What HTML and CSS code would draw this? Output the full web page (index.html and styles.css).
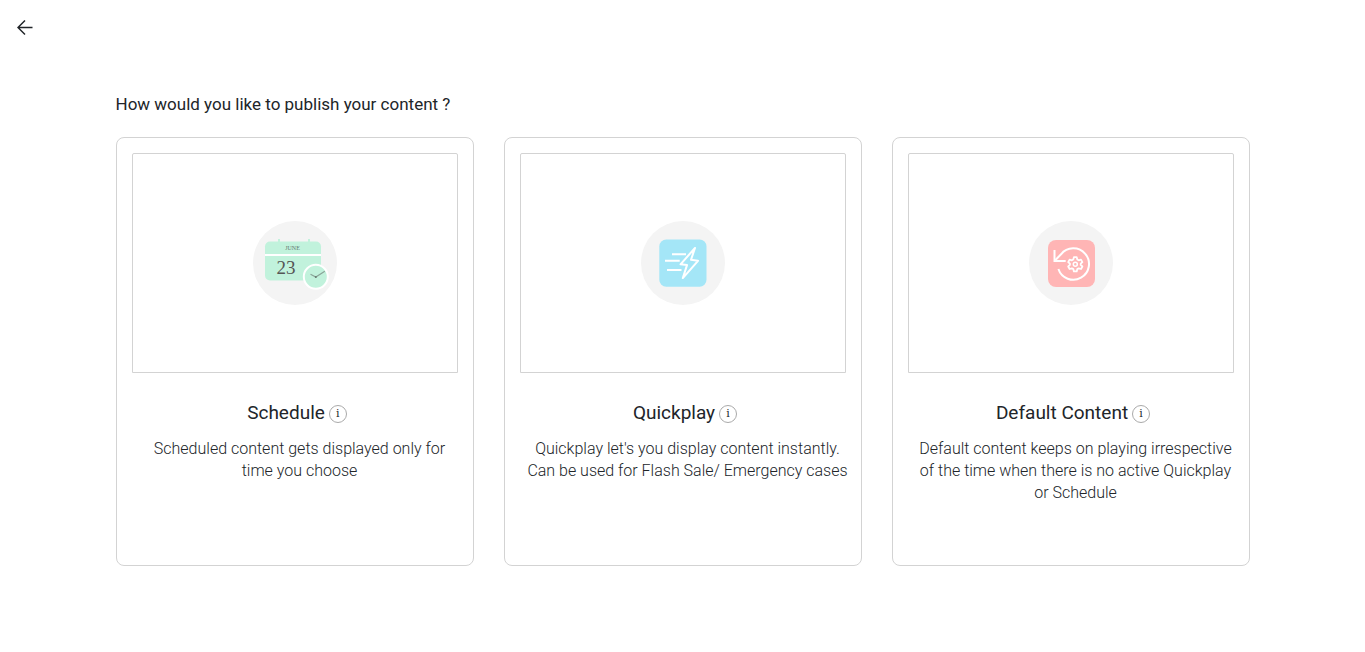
FILE: index.html
```
<!DOCTYPE html>
<html lang="en">
<head>
  <meta charset="UTF-8" />
  <meta name="viewport" content="width=device-width, initial-scale=1.0" />
  <title>Publish content</title>
  <link rel="stylesheet" href="styles.css">
</head>
<body>
  <header class="topbar">
    <a class="back" href="#" aria-label="Back">
      <svg width="16" height="16" viewBox="0 0 16 16" fill="none" stroke="#212529" stroke-width="1.5">
        <path d="M15.500 7.500H1M8 .5l-7 7 7 7" />
      </svg>
    </a>
  </header>

  <main class="publish">
    <h1>How would you like to publish your content ?</h1>

    <div class="cards">
      <!-- Schedule -->
      <section class="card">
        <div class="preview">
          <svg width="84" height="84" viewBox="0 0 84 84">
            <circle cx="42" cy="42" r="42" fill="#f4f4f4" />
            <path d="M26 18v5M56 18v5" stroke="#c1f2dc" stroke-width="2" />
            <rect x="12" y="20.500" width="56" height="39" rx="5" fill="#c1f2dc" />
            <path d="M12 34h56" stroke="#fff" stroke-width="2" />
            <text class="month" x="39.500" y="29" text-anchor="middle">JUNE</text>
            <text class="day" x="33" y="53" text-anchor="middle">23</text>
            <circle cx="62.800" cy="55.700" r="12" fill="#c1f2dc" stroke="#fff" stroke-width="2" />
            <path d="M57.500 53.300l5.300 2.700 9-5.700" fill="none" stroke="#8aa498" stroke-width="1.200" />
            <circle cx="62.800" cy="56" r="1" fill="#667a70" />
          </svg>
        </div>
        <h2>Schedule <button class="info" type="button" aria-label="About Schedule">i</button></h2>
        <p>Scheduled content gets displayed only for time you choose</p>
      </section>

      <!-- Quickplay -->
      <section class="card">
        <div class="preview">
          <svg width="84" height="84" viewBox="0 0 84 84">
            <circle cx="42" cy="42" r="42" fill="#f4f4f4" />
            <rect x="18.300" y="18.500" width="47.200" height="47.200" rx="7" fill="#a4e6f7" />
            <g fill="none" stroke="#fff" stroke-width="2">
              <path d="M31 33.300h14M24 39.700h14.700M26 49h14.500" />
              <path d="M54 27L39.500 43.300l6.500.8-4.200 13L57 39.800l-7-1z" stroke-linejoin="round" />
            </g>
          </svg>
        </div>
        <h2>Quickplay <button class="info" type="button" aria-label="About Quickplay">i</button></h2>
        <p>Quickplay let's you display content instantly. Can be used for Flash Sale/ Emergency cases</p>
      </section>

      <!-- Default content -->
      <section class="card">
        <div class="preview">
          <svg width="84" height="84" viewBox="0 0 84 84">
            <circle cx="42" cy="42" r="42" fill="#f4f4f4" />
            <rect x="19" y="19" width="47" height="47" rx="8" fill="#ffb5b5" />
            <g fill="none" stroke="#fff" stroke-width="2">
              <path d="M25.500 29v11h11.200" />
              <path d="M29.400 48A15.700 15.700 0 1 0 32 33.300L25.500 40" />
              <circle cx="46.300" cy="43.300" r="2" stroke-width="1.500" />
              <path d="M44.900 36.200h2.800l.6 2.300 1.400.8 2.300-.7 1.400 2.500-1.700 1.600v1.200l1.700 1.600-1.400 2.500-2.300-.7-1.400.8-.6 2.300h-2.800l-.6-2.300-1.400-.8-2.300.7-1.400-2.500 1.700-1.600v-1.200l-1.700-1.600 1.400-2.500 2.300.7 1.400-.8z" stroke-width="1.800" stroke-linejoin="round" />
            </g>
          </svg>
        </div>
        <h2>Default Content <button class="info" type="button" aria-label="About Default Content">i</button></h2>
        <p>Default content keeps on playing irrespective of the time when there is no active Quickplay or Schedule</p>
      </section>
    </div>
  </main>
</body>
</html>
```
FILE: styles.css
```
/* ===== Base reset ===== */
* { box-sizing: border-box; margin: 0; padding: 0; }
body {
  background: #fff;
  color: #212529;
  font-family: Roboto, "Open Sans", sans-serif;
}

/* ===== Top bar ===== */
.topbar { padding: 20px 17px; }
.back { display: block; width: 16px; height: 16px; }
.back svg { display: block; }

/* ===== Page ===== */
.publish {
  max-width: 1134px;
  margin: 36px auto 0;
}
h1 {
  font-size: 17px;
  font-weight: 400;
  line-height: 24px;
  margin-bottom: 21px;
}

/* ===== Cards ===== */
.cards {
  display: grid;
  grid-template-columns: repeat(auto-fit, minmax(300px, 1fr));
  gap: 30px;
}
.card {
  min-height: 429px;
  padding: 15px 10px 15px 15px;
  border: 1px solid #d3d3d3;
  border-radius: 8px;
  text-align: center;
}
.preview {
  display: flex;
  justify-content: center;
  align-items: center;
  height: 220px;
  margin-right: 5px;
  border: 1px solid #d3d3d3;
  border-radius: 2px 2px 0 0;
}
.month {
  font: 6px "Liberation Serif", serif;
  fill: #667a70;
}
.day {
  font: 19px "Liberation Serif", serif;
  fill: #555;
}
h2 {
  display: flex;
  justify-content: center;
  align-items: center;
  gap: 4px;
  margin-top: 28px;
  font-size: 19px;
  font-weight: 400;
  line-height: 24px;
}
.info {
  width: 18px;
  height: 18px;
  margin-top: 2px;
  border: 1px solid #aaa;
  border-radius: 50%;
  background: #fff;
  color: #212529;
  font: 11px/16px "DejaVu Serif", serif;
  cursor: pointer;
}
.card p {
  margin-top: 13px;
  padding-left: 5px;
  font-size: 16px;
  font-weight: 300;
  line-height: 22px;
}
```
